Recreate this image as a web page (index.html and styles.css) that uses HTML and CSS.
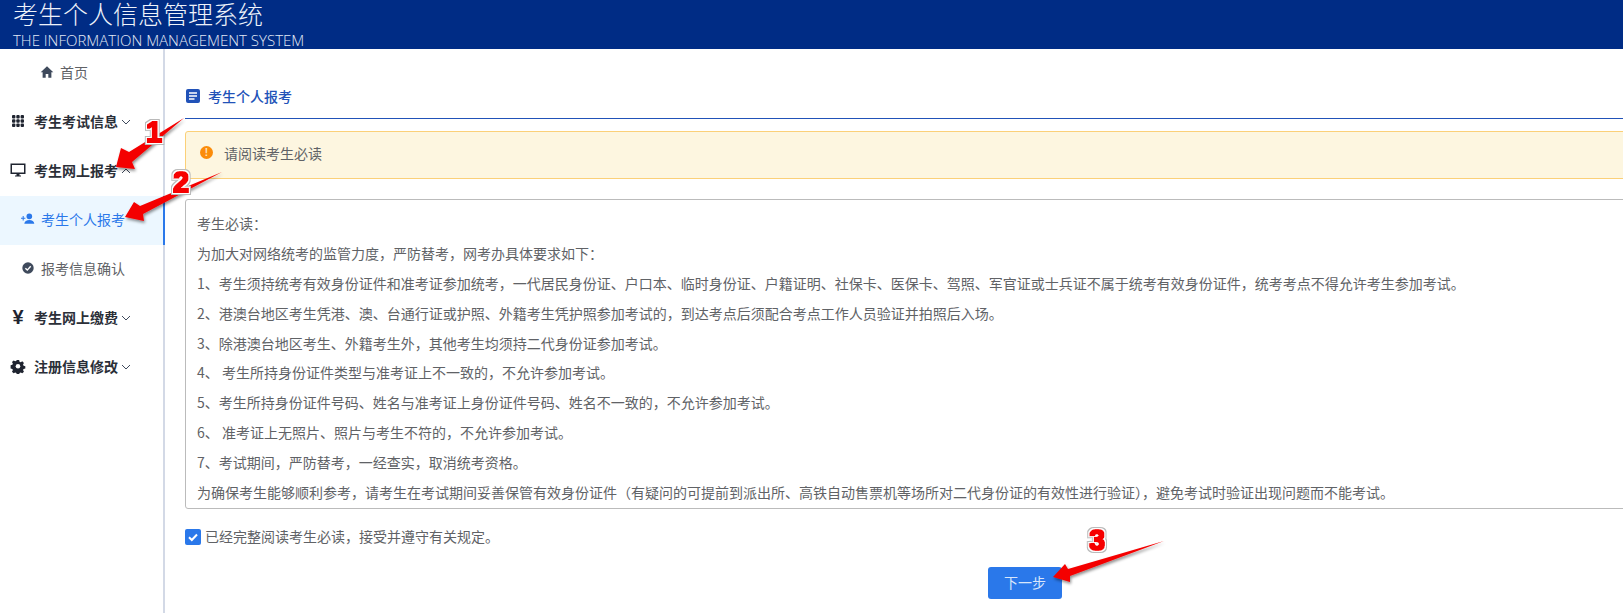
FILE: index.html
```html
<!DOCTYPE html>
<html lang="zh-CN">
<head>
<meta charset="utf-8">
<title>考生个人信息管理系统</title>
<link rel="stylesheet" href="styles.css">
</head>
<body>
<header class="topbar">
  <div class="brand-cn">考生个人信息管理系统</div>
  <div class="brand-en">THE INFORMATION MANAGEMENT SYSTEM</div>
</header>
<div class="shell">
  <nav class="side">
    <a class="item item-home"><svg class="ic" viewBox="0 0 16 16"><path d="M8 1.500 .8 8.200H3v6.300h3.500v-4.300h3v4.300H13V8.200h2.200z" fill="#3f4a5c"/></svg>首页</a>
    <a class="item group"><svg class="ic ic-g" viewBox="0 0 16 16" fill="#1f2430"><rect x="2" y="2" width="3.400" height="3.400" rx="1"/><rect x="6.300" y="2" width="3.400" height="3.400" rx="1"/><rect x="10.600" y="2" width="3.400" height="3.400" rx="1"/><rect x="2" y="6.300" width="3.400" height="3.400" rx="1"/><rect x="6.300" y="6.300" width="3.400" height="3.400" rx="1"/><rect x="10.600" y="6.300" width="3.400" height="3.400" rx="1"/><rect x="2" y="10.600" width="3.400" height="3.400" rx="1"/><rect x="6.300" y="10.600" width="3.400" height="3.400" rx="1"/><rect x="10.600" y="10.600" width="3.400" height="3.400" rx="1"/></svg><span class="gt">考生考试信息</span><svg class="chev" viewBox="0 0 10 6"><path d="M1 1l4 4 4-4" fill="none" stroke="#3f4a5c" stroke-width="1"/></svg></a>
    <a class="item group"><svg class="ic ic-g" viewBox="0 0 16 16" fill="#1f2430"><path d="M.5 1.500h15v10.500H.5zM2 3v7.500h12V3z" fill-rule="evenodd"/><path d="M6.500 12h3v1.500h1.500v1H5v-1h1.500z"/></svg><span class="gt">考生网上报考</span><svg class="chev" viewBox="0 0 10 6"><path d="M1 5l4-4 4 4" fill="none" stroke="#3f4a5c" stroke-width="1"/></svg></a>
    <a class="item sub active"><svg class="ic" viewBox="0 0 16 16" fill="#2a78ea"><circle cx="9.500" cy="5" r="3.200"/><path d="M3.800 13.500c0-3 2.700-4.500 5.700-4.500s5.700 1.500 5.700 4.500z"/><path d="M0 6.500h1.900V4.600h1.200v1.900H5v1.200H3.100v1.900H1.900V7.700H0z"/></svg>考生个人报考</a>
    <a class="item sub"><svg class="ic" viewBox="0 0 16 16"><circle cx="8" cy="8" r="6.500" fill="#3f4a5c"/><path d="M5 8.200 7.200 10.400 11.100 6" fill="none" stroke="#fff" stroke-width="1.600"/></svg>报考信息确认</a>
    <a class="item group"><span class="yen">¥</span><span class="gt">考生网上缴费</span><svg class="chev" viewBox="0 0 10 6"><path d="M1 1l4 4 4-4" fill="none" stroke="#3f4a5c" stroke-width="1"/></svg></a>
    <a class="item group"><svg class="ic ic-g" viewBox="0 0 16 16"><path d="M6.700 1.500h2.600l.4 1.900 1.300.6 1.700-1 1.800 1.800-1 1.700.6 1.300 1.900.4v2.600l-1.900.4-.6 1.300 1 1.700-1.800 1.800-1.700-1-1.300.6-.4 1.900H6.700l-.4-1.900-1.300-.6-1.700 1-1.800-1.800 1-1.700-.6-1.300-1.900-.4V7.200l1.900-.4.6-1.300-1-1.700 1.800-1.800 1.700 1 1.300-.6z" transform="translate(.6 .6) scale(.92)" fill="#1f2430"/><circle cx="8" cy="8.300" r="2.300" fill="#fff"/></svg><span class="gt">注册信息修改</span><svg class="chev" viewBox="0 0 10 6"><path d="M1 1l4 4 4-4" fill="none" stroke="#3f4a5c" stroke-width="1"/></svg></a>
  </nav>
  <main class="main">
    <h2 class="ptitle"><svg class="pt-ic" viewBox="0 0 14 14"><rect width="14" height="14" rx="2" fill="#2152b8"/><path d="M3 3.200h8v1.600H3zM3 6.200h8v1.600H3zM3 9.200h5.500v1.600H3z" fill="#fff"/></svg>考生个人报考</h2>
    <div class="alert"><span class="dot">!</span>请阅读考生必读</div>
    <div class="notice">
      <p>考生必读：</p>
      <p>为加大对网络统考的监管力度，严防替考，网考办具体要求如下：</p>
      <p>1、考生须持统考有效身份证件和准考证参加统考，一代居民身份证、户口本、临时身份证、户籍证明、社保卡、医保卡、驾照、军官证或士兵证不属于统考有效身份证件，统考考点不得允许考生参加考试。</p>
      <p>2、港澳台地区考生凭港、澳、台通行证或护照、外籍考生凭护照参加考试的，到达考点后须配合考点工作人员验证并拍照后入场。</p>
      <p>3、除港澳台地区考生、外籍考生外，其他考生均须持二代身份证参加考试。</p>
      <p>4、 考生所持身份证件类型与准考证上不一致的，不允许参加考试。</p>
      <p>5、考生所持身份证件号码、姓名与准考证上身份证件号码、姓名不一致的，不允许参加考试。</p>
      <p>6、 准考证上无照片、照片与考生不符的，不允许参加考试。</p>
      <p>7、考试期间，严防替考，一经查实，取消统考资格。</p>
      <p>为确保考生能够顺利参考，请考生在考试期间妥善保管有效身份证件（有疑问的可提前到派出所、高铁自动售票机等场所对二代身份证的有效性进行验证），避免考试时验证出现问题而不能考试。</p>
    </div>
    <label class="agree"><span class="cb"><svg viewBox="0 0 16 16"><path d="M4 8.300 6.800 11 12 5.500" fill="none" stroke="#fff" stroke-width="2"/></svg></span><span class="agree-t">已经完整阅读考生必读，接受并遵守有关规定。</span></label>
    <div class="actions"><button class="next">下一步</button></div>
  </main>
</div>
<svg class="marks" width="1623" height="613" viewBox="0 0 1623 613">
  <defs>
    <filter id="sh" x="-20%" y="-20%" width="140%" height="140%"><feDropShadow dx="1" dy="2" stdDeviation="1.500" flood-color="#000" flood-opacity=".45"/></filter>
    <filter id="num" x="-60%" y="-60%" width="220%" height="220%">
      <feMorphology in="SourceAlpha" operator="dilate" radius="3" result="o"/>
      <feFlood flood-color="#b9b9b9"/><feComposite in2="o" operator="in" result="grey"/>
      <feMorphology in="SourceAlpha" operator="dilate" radius="2.400" result="w"/>
      <feFlood flood-color="#fff"/><feComposite in2="w" operator="in" result="white"/>
      <feMorphology in="SourceAlpha" operator="dilate" radius="1" result="r"/>
      <feFlood flood-color="#f60000"/><feComposite in2="r" operator="in" result="red"/>
      <feMerge><feMergeNode in="grey"/><feMergeNode in="white"/><feMergeNode in="red"/></feMerge>
    </filter>
  </defs>
  <g fill="#f40000" filter="url(#sh)">
    <path d="M184 118 129 152 121 148 116 167 135 169 132 162z"/>
    <path d="M222 172 140 206 134 202 125 217 144 221 143 214z"/>
    <path d="M1164 541 1068 569 1065 564 1053 577 1070 582 1070 576z"/>
  </g>
  <g class="num" filter="url(#num)"><text x="146" y="142">1</text><text x="173" y="192">2</text><text x="1089" y="550">3</text></g>
</svg>
</body>
</html>
```

FILE: styles.css
```css
* { box-sizing: border-box; }
html, body { margin: 0; height: 100%; overflow: hidden; }
body { width: 1623px; height: 613px; background: #fff; color: #606266; font: 14px "Noto Sans CJK SC", "Liberation Sans", sans-serif; position: relative; }
.topbar { height: 49px; background: #002c85; color: #fff; padding-left: 13px; overflow: hidden; }
.brand-cn { font: 300 25px/30px "Liberation Sans", "Noto Sans CJK SC", sans-serif; color: #eef2fa; }
.brand-en { font: 300 15px/19px "Open Sans", "Liberation Sans", sans-serif; padding-top: 1px; color: #e2e9f6; }
.shell { display: flex; height: 564px; }
.side { width: 165px; flex: none; border-right: 2px solid #d3d9e6; }
.item { display: flex; align-items: center; height: 49px; padding-bottom: 3px; color: #606266; }
.ic { width: 14px; height: 14px; flex: none; }
.item-home { padding-left: 40px; }
.item-home .ic { margin-right: 6px; }
.group { padding-left: 10px; color: #2b2f38; font-weight: 700; }
.ic-g { width: 16px; height: 16px; margin-right: 8px; }
.gt { width: 87px; }
.chev { width: 10px; height: 6px; margin-top: 1px; }
.yen { width: 16px; margin-right: 8px; font: 700 20px/20px "Liberation Sans", sans-serif; color: #1f2430; text-align: center; }
.sub { padding-left: 21px; }
.sub .ic { margin-right: 6px; }
.active { background: #ecf7ff; color: #2a78ea; border-right: 2px solid #2a78ea; margin-right: -2px; }
.main { flex: 1; min-width: 0; padding-left: 20px; overflow: hidden; }
.ptitle { margin: 0 -10px 0 0; height: 70px; display: flex; align-items: center; padding: 25px 0 0 1px; border-bottom: 1px solid #2152b8; font-size: 14px; font-weight: 500; color: #2152b8; }
.pt-ic { width: 14px; height: 14px; margin-right: 8px; }
.alert { height: 48px; margin: 12px -20px 0 0; padding: 0 0 5px 14px; background: #fdf6e0; border: 1px solid #fbd078; border-radius: 3px; display: flex; align-items: center; }
.dot { width: 13px; height: 13px; border-radius: 50%; background: #fb8c0a; color: #fde6c5; font: 700 10px/13px "Liberation Sans", sans-serif; text-align: center; margin-right: 11px; }
.notice { height: 310px; width: 1500px; margin-top: 20px; border: 1px solid #bbb; border-radius: 3px; padding: 8px 11px 0; overflow: hidden; }
.notice p { margin: 0; height: 29.9px; line-height: 30px; white-space: nowrap; }
.agree { display: flex; align-items: center; margin-top: 20px; height: 16px; }
.agree-t { padding-bottom: 2px; }
.cb { width: 16px; height: 16px; border-radius: 2px; background: #2a78ea; margin-right: 4px; }
.cb svg { display: block; }
.actions { display: flex; padding-left: 803px; margin-top: 22px; }
.next { width: 74px; height: 32px; padding: 0 0 2px; background: #2a78ea; color: #d8e6fb; border: 0; border-radius: 3px; font: 14px "Noto Sans CJK SC", sans-serif; }
.marks { position: absolute; left: 0; top: 0; pointer-events: none; }
.num text { font: 700 29px "Liberation Sans", sans-serif; fill: #f00; }
```
